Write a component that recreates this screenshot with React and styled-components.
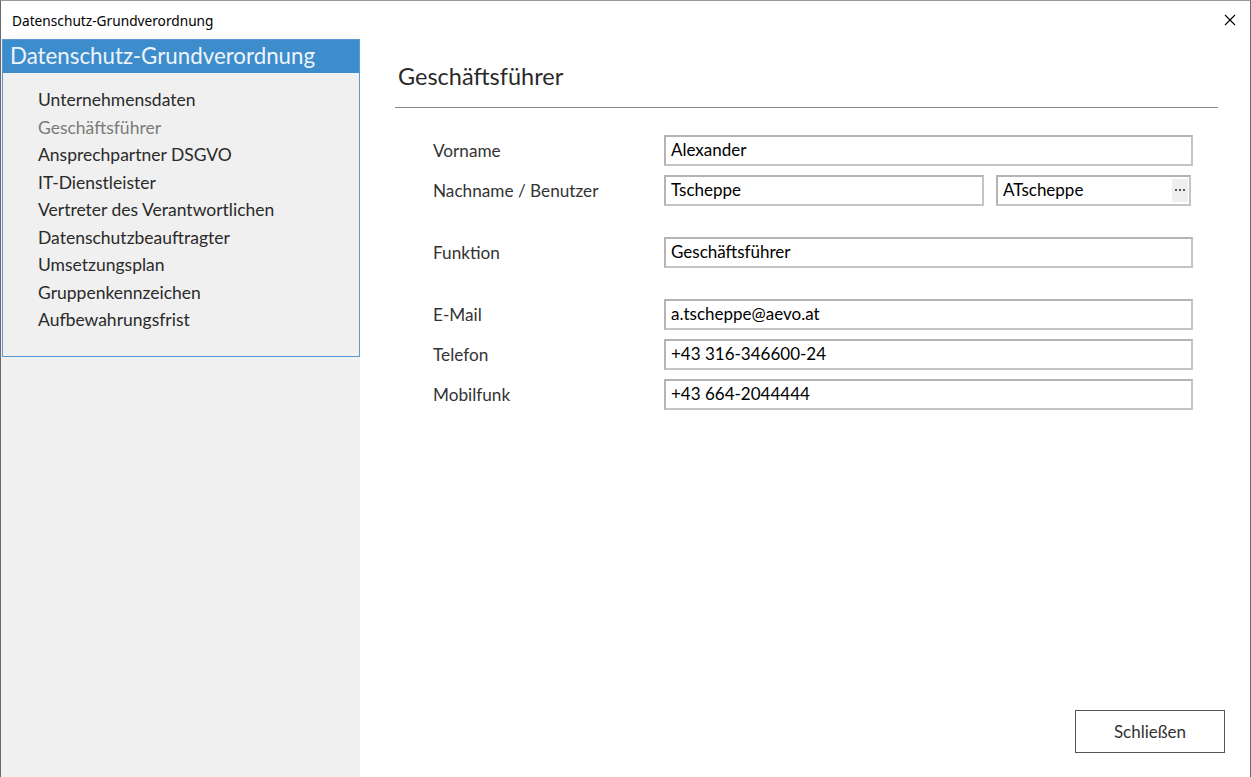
import React from 'react'
import styled, { createGlobalStyle } from 'styled-components'

const GlobalStyle = createGlobalStyle`
  html, body {
    margin: 0;
    padding: 0;
    background: #ffffff;
  }
  * {
    box-sizing: border-box;
  }
`

const navItems = [
  { label: 'Unternehmensdaten' },
  { label: 'Geschäftsführer', active: true },
  { label: 'Ansprechpartner DSGVO' },
  { label: 'IT-Dienstleister' },
  { label: 'Vertreter des Verantwortlichen' },
  { label: 'Datenschutzbeauftragter' },
  { label: 'Umsetzungsplan' },
  { label: 'Gruppenkennzeichen' },
  { label: 'Aufbewahrungsfrist' },
]

const CloseIcon = () => (
  <svg width="12" height="12" viewBox="0 0 12 12">
    <path d="M1 1 L11 11 M11 1 L1 11" stroke="#000" strokeWidth="1.1" fill="none" />
  </svg>
)

const DotsIcon = () => (
  <svg width="10" height="3" viewBox="0 0 10 3">
    <rect x="0" y="0" width="2" height="2" fill="#555" />
    <rect x="4" y="0" width="2" height="2" fill="#555" />
    <rect x="8" y="0" width="2" height="2" fill="#555" />
  </svg>
)

const App = () => {
  return (
    <Window>
      <GlobalStyle />
      <TitleBar>
        <TitleText>Datenschutz-Grundverordnung</TitleText>
        <CloseButton>
          <CloseIcon />
        </CloseButton>
      </TitleBar>
      <Body>
        <Sidebar>
          <NavPanel>
            <NavHeader>Datenschutz-Grundverordnung</NavHeader>
            <NavList>
              {navItems.map(item => (
                <NavItem key={item.label} active={item.active}>{item.label}</NavItem>
              ))}
            </NavList>
          </NavPanel>
        </Sidebar>
        <Main>
          <Heading>Geschäftsführer</Heading>
          <Divider />
          <Form>
            <Group>
              <Row>
                <Label>Vorname</Label>
                <Field>Alexander</Field>
              </Row>
              <Row>
                <Label>Nachname / Benutzer</Label>
                <SplitFields>
                  <Field>Tscheppe</Field>
                  <Field>
                    ATscheppe
                    <PickButton><DotsIcon /></PickButton>
                  </Field>
                </SplitFields>
              </Row>
            </Group>
            <Group>
              <Row>
                <Label>Funktion</Label>
                <Field>Geschäftsführer</Field>
              </Row>
            </Group>
            <Group>
              <Row>
                <Label>E-Mail</Label>
                <Field>a.tscheppe@aevo.at</Field>
              </Row>
              <Row>
                <Label>Telefon</Label>
                <Field>+43 316-346600-24</Field>
              </Row>
              <Row>
                <Label>Mobilfunk</Label>
                <Field>+43 664-2044444</Field>
              </Row>
            </Group>
          </Form>
          <Footer>
            <Button>Schließen</Button>
          </Footer>
        </Main>
      </Body>
    </Window>
  )
}

export default App

const Window = styled.div`
  width: 1251px;
  height: 777px;
  display: flex;
  flex-direction: column;
  border-left: 1px solid #6a6a6a;
  border-right: 1px solid #6a6a6a;
  border-top: 1px solid #9a9a9a;
  background: #ffffff;
  overflow: hidden;
`

const TitleBar = styled.div`
  height: 38px;
  flex: 0 0 38px;
  display: flex;
  align-items: center;
  justify-content: space-between;
  padding: 0 14px 0 11px;
  background: #ffffff;
`

const TitleText = styled.div`
  font-family: 'Noto Sans', 'Open Sans', sans-serif;
  font-size: 13.7px;
  color: #000;
`

const CloseButton = styled.div`
  width: 12px;
  height: 12px;
  display: flex;
`

const Body = styled.div`
  flex: 1;
  display: flex;
  min-height: 0;
`

const Sidebar = styled.div`
  width: 359px;
  flex: 0 0 359px;
  background: #f0f0f0;
  padding-left: 1px;
`

const NavPanel = styled.div`
  height: 318px;
  border: 1px solid #5a9bd5;
  background: #f0f0f0;
  display: flex;
  flex-direction: column;
`

const NavHeader = styled.div`
  height: 33px;
  background: #3d8dcd;
  color: #eef4fa;
  font-family: 'Lato', 'Open Sans', sans-serif;
  font-size: 22.3px;
  line-height: 32px;
  padding-left: 7px;
  white-space: nowrap;
`

const NavList = styled.div`
  display: flex;
  flex-direction: column;
  padding: 13px 0 0 35px;
`

const NavItem = styled.div`
  font-family: 'Lato', 'Open Sans', sans-serif;
  font-size: 17.5px;
  line-height: 27.5px;
  color: ${props => props.active ? '#7a7a7a' : '#2a2a2a'};
  white-space: nowrap;
`

const Main = styled.div`
  flex: 1;
  display: flex;
  flex-direction: column;
  padding: 22px 32px 24px 35px;
`

const Heading = styled.div`
  font-family: 'Lato', 'Open Sans', sans-serif;
  font-size: 23.5px;
  line-height: 30px;
  color: #2a2a2a;
  padding-left: 3px;
`

const Divider = styled.div`
  height: 1px;
  background: #8a8a8a;
  margin-top: 16px;
`

const Form = styled.div`
  display: flex;
  flex-direction: column;
  gap: 31px;
  margin: 27px 25px 0 38px;
`

const Group = styled.div`
  display: flex;
  flex-direction: column;
  gap: 9px;
`

const Row = styled.div`
  display: grid;
  grid-template-columns: 231px 1fr;
  align-items: center;
  height: 31px;
`

const Label = styled.div`
  font-family: 'Lato', 'Open Sans', sans-serif;
  font-size: 17.2px;
  color: #333333;
  white-space: nowrap;
`

const SplitFields = styled.div`
  display: grid;
  grid-template-columns: 320px 195px;
  gap: 12px;
  height: 31px;
`

const Field = styled.div`
  position: relative;
  height: 31px;
  border: 2px solid #c4c4c4;
  border-top-color: #b4b4b4;
  border-left-color: #b4b4b4;
  background: #ffffff;
  font-family: 'Lato', 'Open Sans', sans-serif;
  font-size: 17px;
  line-height: 25px;
  color: #000;
  padding-left: 5px;
  white-space: nowrap;
`

const PickButton = styled.div`
  position: absolute;
  right: 1px;
  top: 2px;
  width: 16px;
  height: 23px;
  background: #efefef;
  display: flex;
  align-items: center;
  justify-content: center;
`

const Footer = styled.div`
  margin-top: auto;
  display: flex;
  justify-content: flex-end;
`

const Button = styled.div`
  width: 150px;
  height: 43px;
  border: 1px solid #555555;
  background: #ffffff;
  display: flex;
  align-items: center;
  justify-content: center;
  font-family: 'Lato', 'Open Sans', sans-serif;
  font-size: 17px;
  color: #333;
  margin-right: -7px;
`
